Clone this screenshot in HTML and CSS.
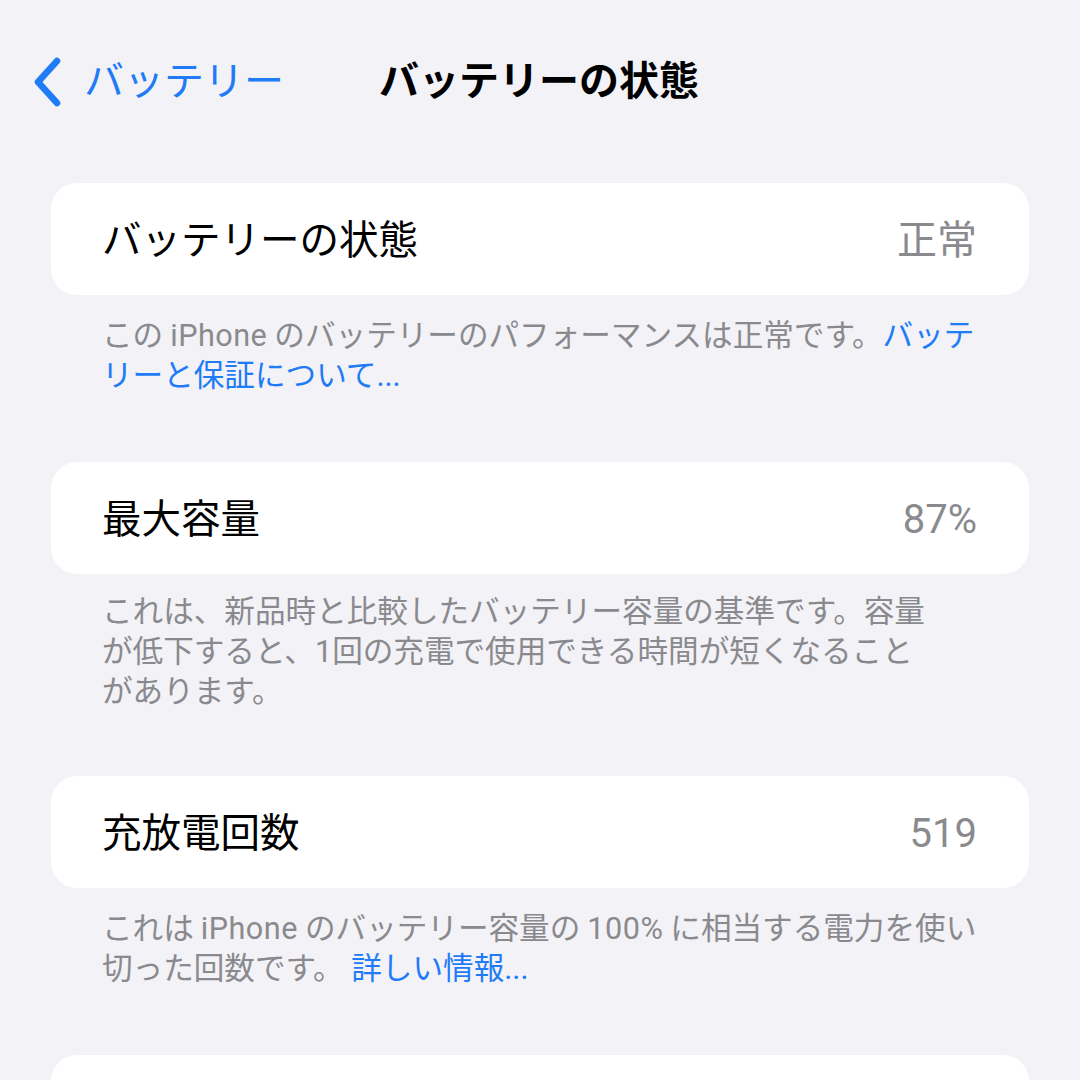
FILE: index.html
```html
<!DOCTYPE html>
<html lang="ja">
<head>
<meta charset="utf-8">
<title>バッテリーの状態</title>
<link rel="stylesheet" href="styles.css">
</head>
<body>
<header class="nav">
  <a class="back" href="#">
    <svg class="chev" width="30" height="50" viewBox="0 0 30 50"><path d="M25 4 L6 25 L25 46" fill="none" stroke="#1f7bf6" stroke-width="6.5" stroke-linecap="round" stroke-linejoin="round"/></svg>
    <span class="back-text">バッテリー</span>
  </a>
  <h1 class="title">バッテリーの状態</h1>
  <div class="spacer"></div>
</header>
<main class="content">
  <section class="group">
    <div class="card"><span class="label">バッテリーの状態</span><span class="value">正常</span></div>
    <p class="foot">この<span class="lat">iPhone</span>のバッテリーのパフォーマンスは正常です。<a class="link" href="#">バッテ<br>リーと保証について...</a></p>
  </section>
  <section class="group">
    <div class="card"><span class="label">最大容量</span><span class="value">87%</span></div>
    <p class="foot foot-three">これは、新品時と比較したバッテリー容量の基準です。容量<br>が低下すると、1回の充電で使用できる時間が短くなること<br>があります。</p>
  </section>
  <section class="group">
    <div class="card"><span class="label">充放電回数</span><span class="value">519</span></div>
    <p class="foot">これは<span class="lat">iPhone</span>のバッテリー容量の<span class="lat">100%</span>に相当する電力を使い<br>切った回数です。 <a class="link" href="#">詳しい情報...</a></p>
  </section>
  <section class="group">
    <div class="card"></div>
  </section>
</main>
</body>
</html>
```

FILE: styles.css
```css
html, body {
  margin: 0;
  padding: 0;
  background: #f2f2f7;
}
body {
  width: 1080px;
  height: 1080px;
  overflow: hidden;
  font-family: "Roboto", "Noto Sans CJK JP", sans-serif;
  color: #000;
}
.nav {
  height: 164px;
  display: grid;
  grid-template-columns: 1fr auto 1fr;
  align-items: center;
}
.back {
  display: flex;
  align-items: center;
  gap: 22px;
  padding-left: 32px;
  text-decoration: none;
  color: #1f7bf6;
}
.chev { display: block; }
.back-text {
  font-size: 40px;
  line-height: 1;
}
.title {
  margin: 0;
  font-size: 40px;
  font-weight: 700;
  line-height: 1;
  position: relative;
  left: -1px;
}
.content {
  padding-top: 19px;
}
.group {
  margin: 0 51px;
}
.card {
  height: 112px;
  background: #fff;
  border-radius: 26px;
  padding: 4px 52px 0 51px;
  box-sizing: border-box;
  display: flex;
  align-items: center;
  justify-content: space-between;
}
.label {
  font-size: 39.5px;
  line-height: 1;
}
.value {
  font-size: 40px;
  line-height: 1;
  color: #8a8a8e;
}
.foot {
  margin: 0;
  padding: 21px 51px 66px;
  font-size: 30.6px;
  line-height: 40px;
  color: #8a8a8e;
  white-space: nowrap;
}
.foot-three {
  padding-top: 18px;
  padding-bottom: 64px;
}
.lat {
  margin: 0 7px;
  letter-spacing: 0.5px;
}
.link {
  color: #1f7bf6;
  text-decoration: none;
}
```
